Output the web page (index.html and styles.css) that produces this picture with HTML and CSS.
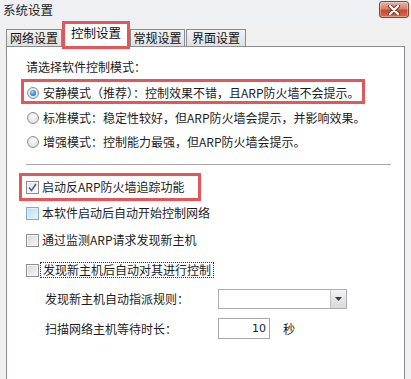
FILE: index.html
```html
<!DOCTYPE html>
<html lang="zh">
<head>
<meta charset="utf-8">
<title>系统设置</title>
<link rel="stylesheet" href="styles.css">
</head>
<body>
<div class="window">
  <div class="titlebar">
    <span class="title">系统设置</span>
    <button class="close" aria-label="关闭">
      <svg width="14" height="10" viewBox="0 0 14 10">
        <path d="M3 1 L11 9 M11 1 L3 9" stroke="#6b2b22" stroke-width="4" stroke-linecap="round"/>
        <path d="M3 1 L11 9 M11 1 L3 9" stroke="#ffffff" stroke-width="2.4" stroke-linecap="round"/>
      </svg>
    </button>
  </div>
  <div class="tabs">
    <div class="tab t1">网络设置</div>
    <div class="tab active">控制设置<span class="mark mark-tab"></span></div>
    <div class="tab t3">常规设置</div>
    <div class="tab t4">界面设置</div>
  </div>
  <div class="panel">
    <div class="row label-row">请选择软件控制模式：</div>
    <div class="row r1 marked">
      <span class="radio checked"></span><span class="txt">安静模式（推荐）：控制效果不错，且ARP防火墙不会提示。</span>
      <span class="mark mark-r1"></span>
    </div>
    <div class="row r2">
      <span class="radio"></span><span class="txt">标准模式：稳定性较好，但ARP防火墙会提示，并影响效果。</span>
    </div>
    <div class="row r3">
      <span class="radio"></span><span class="txt">增强模式：控制能力最强，但ARP防火墙会提示。</span>
    </div>
    <div class="sep"></div>
    <div class="row c1 marked">
      <span class="check checked">
        <svg width="9" height="9" viewBox="0 0 9 9"><path d="M1 4.5 L3.5 7.5 L8 1" fill="none" stroke="#4b5f95" stroke-width="1.6"/></svg>
      </span><span class="ctxt">启动反ARP防火墙追踪功能</span>
      <span class="mark mark-c1"></span>
    </div>
    <div class="row c2">
      <span class="check hover"></span><span class="ctxt">本软件启动后自动开始控制网络</span>
    </div>
    <div class="row c3">
      <span class="check"></span><span class="ctxt">通过监测ARP请求发现新主机</span>
    </div>
    <div class="row c4">
      <span class="check"></span><span class="ctxt focus">发现新主机后自动对其进行控制</span>
    </div>
    <div class="field f1">
      <span class="flabel">发现新主机自动指派规则：</span>
      <div class="select"><span class="arrow"><svg width="7" height="4" viewBox="0 0 7 4"><path d="M0 0 H7 L3.5 4 Z" fill="#3c3c3c"/></svg></span></div>
    </div>
    <div class="field f2">
      <span class="flabel">扫描网络主机等待时长：</span>
      <div class="input">10</div>
      <span class="unit">秒</span>
    </div>
  </div>
</div>
</body>
</html>
```

FILE: styles.css
```css
* { box-sizing: border-box; }
html, body {
  margin: 0;
  padding: 0;
  width: 411px;
  height: 379px;
  overflow: hidden;
  background: #f0f0f0;
  font-family: "Noto Sans CJK SC", "Noto Sans", sans-serif;
  font-size: 12px;
  color: #1c1c1c;
}
.window { width: 411px; height: 379px; }

.titlebar {
  height: 21px;
  display: flex;
  align-items: center;
  justify-content: space-between;
  padding: 0 2px 0 3px;
  background: #eef0f3;
}
.title { font-size: 12.5px; color: #222; line-height: 1; }
.close {
  width: 30px;
  height: 17px;
  margin-top: -2px;
  padding: 0;
  border: 1px solid #8c3f35;
  border-radius: 3px;
  background: linear-gradient(#eab0a2 0%, #d9806b 45%, #c44a33 55%, #d8694e 100%);
  display: flex;
  align-items: center;
  justify-content: center;
  box-shadow: inset 0 0 0 1px rgba(255,255,255,0.35);
}

.tabs {
  height: 26px;
  display: flex;
  align-items: flex-end;
  padding-left: 6px;
  position: relative;
  z-index: 2;
}
.tab {
  height: 17px;
  margin-bottom: 1px;
  border: 1px solid #898c95;
  border-bottom: none;
  background: linear-gradient(#f2f2f2, #e0e0e0);
  display: flex;
  align-items: center;
  justify-content: center;
  font-size: 12px;
  line-height: 1;
  color: #111;
  position: relative;
}
.t1 { width: 56px; }
.active {
  width: 66px;
  height: 25px;
  margin-left: 1px;
  margin-bottom: 0;
  background: #fff;
  padding-bottom: 3px;
  font-size: 12.5px;
}
.t3 { width: 55px; margin-left: 1px; }
.t4 { width: 60px; margin-left: 1px; }

.mark {
  position: absolute;
  border: 3px solid #e2575b;
  pointer-events: none;
}
.mark-tab { left: -2px; right: -2px; top: -2px; bottom: -2px; }

.panel {
  margin-left: 6px;
  margin-top: -1px;
  width: 399px;
  height: 345px;
  background: #fff;
  border: 1px solid #898c95;
  display: flex;
  flex-direction: column;
  align-items: flex-start;
  padding: 10px 12px 0 19px;
  position: relative;
  z-index: 1;
}

.row {
  height: 20px;
  display: flex;
  align-items: center;
  position: relative;
  line-height: 1;
  white-space: nowrap;
}
.label-row { margin-top: 0; }
.r1 { margin-top: 6px; }
.r2 { margin-top: 5px; }
.r3 { margin-top: 4px; }
.mark-r1 { left: -5px; width: 344px; top: -4px; bottom: -1px; }

.radio {
  width: 12px;
  height: 12px;
  margin-left: 1px;
  border-radius: 50%;
  border: 1px solid #8e8f8f;
  background: radial-gradient(circle at 50% 40%, #fbfbfb 0%, #e6e6e6 60%, #cfcfcf 100%);
  position: relative;
  flex: none;
}
.radio.checked::after {
  content: "";
  position: absolute;
  left: 2px; top: 2px;
  width: 6px; height: 6px;
  border-radius: 50%;
  background: radial-gradient(circle at 40% 35%, #a6dcfb 0%, #3d93d6 50%, #1b4f8a 100%);
}
.txt { margin-left: 4px; }

.sep {
  width: 365px;
  height: 1px;
  background: #a9a9a9;
  margin-top: 12px;
}

.c1 { margin-top: 12px; }
.c2 { margin-top: 6px; }
.c3 { margin-top: 7px; }
.c4 { margin-top: 10px; }
.mark-c1 { left: -7px; width: 182px; top: -4px; bottom: -4px; }

.check {
  width: 13px;
  height: 13px;
  border: 1px solid #8e8f8f;
  background: linear-gradient(135deg, #d6d6d6, #f8f8f8);
  box-shadow: inset 0 0 0 1px #f4f4f4;
  display: flex;
  align-items: center;
  justify-content: center;
  flex: none;
}
.check.checked { background: linear-gradient(135deg, #e4e4e4, #fbfbfb); }
.check.hover {
  border-color: #7fa8c9;
  background: linear-gradient(135deg, #b9dcf3, #e9f5fc);
  box-shadow: inset 0 0 0 1px #dff0fb;
}
.ctxt { margin-left: 3px; }
.focus {
  outline: 1px dotted #333;
  outline-offset: 1px;
  padding: 0 1px;
  margin-left: 3px;
}

.field {
  display: flex;
  align-items: center;
  margin-left: 19px;
  line-height: 1;
}
.f1 { margin-top: 9px; height: 20px; }
.f2 { margin-top: 9px; height: 21px; }
.flabel { width: 173px; }
.select {
  width: 129px;
  height: 20px;
  border: 1px solid #abadb3;
  background: #fff;
  display: flex;
  justify-content: flex-end;
}
.arrow {
  width: 16px;
  height: 18px;
  border-left: 1px solid #c4c4c4;
  background: linear-gradient(#f3f3f3, #d9d9d9);
  display: flex;
  align-items: center;
  justify-content: center;
}
.input {
  width: 52px;
  height: 21px;
  border: 1px solid #a8a8a8;
  background: #fff;
  display: flex;
  align-items: center;
  justify-content: flex-end;
  padding-right: 3px;
  font-family: "DejaVu Sans", sans-serif;
  font-size: 11px;
}
.unit { margin-left: 13px; }
```
